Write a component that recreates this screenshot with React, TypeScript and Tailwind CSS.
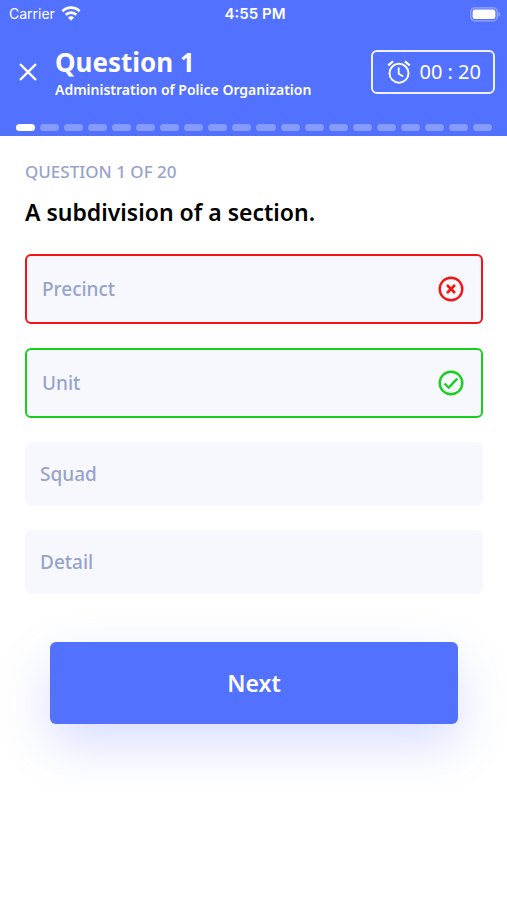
import type { ReactNode } from 'react';

type AnswerState = 'wrong' | 'correct' | 'idle';

interface AnswerProps {
    label: string;
    state: AnswerState;
}

const TOTAL = 20;
const CURRENT = 1;

const ANSWERS: AnswerProps[] = [
    { label: 'Precinct', state: 'wrong' },
    { label: 'Unit', state: 'correct' },
    { label: 'Squad', state: 'idle' },
    { label: 'Detail', state: 'idle' },
];

const answerStyles: Record<AnswerState, string> = {
    wrong: 'border-2 border-[#f31414]',
    correct: 'border-2 border-[#18cf1c]',
    idle: '',
};

const WifiIcon = () => (
    <svg width="20" height="16" viewBox="0 0 20 16" fill="none" stroke="white" strokeWidth="2.7" aria-hidden="true">
        <path d="M1.4 5.2a12.3 12.3 0 0 1 17.2 0" />
        <path d="M4.7 8.8a7.6 7.6 0 0 1 10.6 0" />
        <path d="M10 14.7 6.9 11.6a4.4 4.4 0 0 1 6.2 0z" fill="white" stroke="none" />
    </svg>
);

const BatteryIcon = () => (
    <svg width="31" height="15" viewBox="0 0 31 15" aria-hidden="true">
        <rect x="0.8" y="0.8" width="26.4" height="13" rx="4" fill="none" stroke="white" strokeOpacity="0.4" strokeWidth="1.3" />
        <rect x="2.6" y="2.5" width="22.8" height="9.6" rx="2.4" fill="white" />
        <path d="M28.6 5v4.6c1.9-.6 1.9-4 0-4.6z" fill="white" fillOpacity="0.5" />
    </svg>
);

const AlarmIcon = () => (
    <svg width="24" height="24" viewBox="0 0 24 24" fill="none" stroke="white" strokeWidth="2" aria-hidden="true">
        <circle cx="12" cy="13.2" r="9.5" />
        <path d="M11.7 7.6v6.1l4.5 2.7" strokeWidth="1.8" />
        <path d="M1.2 5.3 6.1 1.3M22.8 5.3l-4.9-4" strokeWidth="2.2" />
    </svg>
);

const ResultIcon = ({ color, children }: { color: string; children: ReactNode }) => (
    <svg width="26" height="26" viewBox="0 0 26 26" fill="none" stroke={color} strokeWidth="2.4" aria-hidden="true">
        <circle cx="13" cy="13" r="11.3" />
        {children}
    </svg>
);

const Answer = ({ label, state }: AnswerProps) => (
    <button className={`flex w-full items-center justify-between rounded-md bg-[#f6f8fe] py-5 pr-[17px] pl-[15px] text-left ${answerStyles[state]}`}>
        <span className="text-[19px] leading-6 font-medium text-[#98a3cb]">{label}</span>
        {state === 'wrong' && (
            <ResultIcon color="#f31414">
                <path d="m9 9 8 8M17 9l-8 8" strokeWidth="2.6" />
            </ResultIcon>
        )}
        {state === 'correct' && (
            <ResultIcon color="#18cf1c">
                <path d="m6.5 13.5 4.2 4.1 8.6-9" />
            </ResultIcon>
        )}
    </button>
);

const StatusBar = () => (
    <div className="grid h-7 grid-cols-3 items-center pr-[6px] pl-[9px] font-['Inter',sans-serif] text-[14px] leading-5">
        <div className="flex items-center gap-[6px]">
            <span>Carrier</span>
            <WifiIcon />
        </div>
        <span className="text-center text-[15px] font-semibold">4:55 PM</span>
        <div className="flex justify-end">
            <BatteryIcon />
        </div>
    </div>
);

const Header = () => (
    <header className="bg-[#5271ff] pb-[5px] text-white">
        <StatusBar />
        <div className="flex items-center pt-4 pr-3 pl-[19px]">
            <button aria-label="Close quiz" className="mr-[18px] shrink-0">
                <svg width="18" height="18" viewBox="0 0 18 18" stroke="white" strokeWidth="2.2" strokeLinecap="round" aria-hidden="true">
                    <path d="m1.6 1.6 14.8 14.8M16.4 1.6 1.6 16.4" />
                </svg>
            </button>
            <div className="min-w-0 flex-1 whitespace-nowrap">
                <h1 className="text-[26px] leading-9 font-bold">Question 1</h1>
                <p className="text-[14px] leading-5 font-semibold">Administration of Police Organization</p>
            </div>
            <div className="flex h-11 shrink-0 items-center gap-2 rounded-md border-2 border-white/90 pr-3 pl-[14px]">
                <AlarmIcon />
                <time className="text-[20px] leading-6 whitespace-nowrap">00 : 20</time>
            </div>
        </div>
        <div role="progressbar" aria-label="Quiz progress" aria-valuenow={CURRENT} aria-valuemax={TOTAL} className="mt-6 flex gap-[5px] pr-[15px] pl-4">
            {Array.from({ length: TOTAL }, (_, i) => (
                <span key={i} className={`h-[7px] flex-1 rounded-full ${i < CURRENT ? 'bg-white' : 'bg-[#869bff]'}`} />
            ))}
        </div>
    </header>
);

const App = () => (
    <div className="min-h-screen bg-white font-['Noto_Sans',sans-serif]">
        <Header />
        <main className="pt-6 pr-6 pl-[25px]">
            <p className="text-[17px] leading-6 font-medium text-[#98a3cb]">QUESTION {CURRENT} OF {TOTAL}</p>
            <h2 className="mt-3 text-[23px] leading-8 font-semibold text-black">A subdivision of a section.</h2>
            <div className="mt-[26px] flex flex-col gap-6">
                {ANSWERS.map((answer) => (
                    <Answer key={answer.label} {...answer} />
                ))}
            </div>
            <div className="mt-12 px-[25px]">
                <button className="w-full rounded-md bg-[#5271ff] py-[25px] text-[23px] leading-8 font-semibold text-white shadow-[0_20px_50px_rgba(82,100,255,0.22)]">
                    Next
                </button>
            </div>
        </main>
    </div>
);

export default App;
